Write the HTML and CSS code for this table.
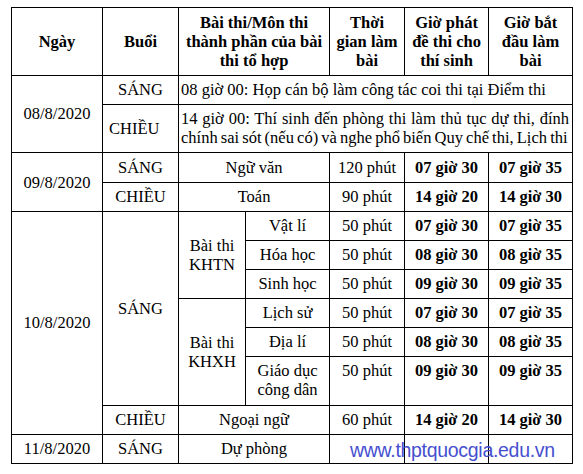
FILE: index.html
```html
<!DOCTYPE html>
<html lang="vi">
<head>
  <meta charset="UTF-8" />
  <meta name="viewport" content="width=device-width, initial-scale=1.0" />
  <title>Lịch thi tốt nghiệp THPT 2020</title>
  <link rel="stylesheet" href="styles.css">
</head>
<body>
  <table class="schedule">
    <colgroup>
      <col class="c-date">
      <col class="c-session">
      <col class="c-group">
      <col class="c-subject">
      <col class="c-time">
      <col class="c-hand">
      <col class="c-start">
    </colgroup>
    <thead>
      <tr>
        <th>Ngày</th>
        <th>Buổi</th>
        <th colspan="2">Bài thi/Môn thi<br>thành phần của bài<br>thi tổ hợp</th>
        <th>Thời<br>gian làm<br>bài</th>
        <th>Giờ phát<br>đề thi cho<br>thí sinh</th>
        <th>Giờ bắt<br>đầu làm<br>bài</th>
      </tr>
    </thead>
    <tbody>
      <tr>
        <td rowspan="2">08/8/2020</td>
        <td>SÁNG</td>
        <td colspan="5" class="note">08 giờ 00: Họp cán bộ làm công tác coi thi tại Điểm thi</td>
      </tr>
      <tr>
        <td class="shift">CHIỀU</td>
        <td colspan="5" class="note"><span class="first-line">14 giờ 00: Thí sinh đến phòng thi làm thủ tục dự thi, đính</span><span class="last-line">chính sai sót (nếu có) và nghe phổ biến Quy chế thi, Lịch thi</span></td>
      </tr>

      <tr class="day-start">
        <td rowspan="2">09/8/2020</td>
        <td>SÁNG</td>
        <td colspan="2">Ngữ văn</td>
        <td>120 phút</td>
        <td class="hour">07 giờ 30</td>
        <td class="hour">07 giờ 35</td>
      </tr>
      <tr>
        <td>CHIỀU</td>
        <td colspan="2">Toán</td>
        <td>90 phút</td>
        <td class="hour">14 giờ 20</td>
        <td class="hour">14 giờ 30</td>
      </tr>

      <tr>
        <td rowspan="7">10/8/2020</td>
        <td rowspan="6">SÁNG</td>
        <td rowspan="3">Bài thi<br>KHTN</td>
        <td>Vật lí</td>
        <td>50 phút</td>
        <td class="hour">07 giờ 30</td>
        <td class="hour">07 giờ 35</td>
      </tr>
      <tr>
        <td>Hóa học</td>
        <td>50 phút</td>
        <td class="hour">08 giờ 30</td>
        <td class="hour">08 giờ 35</td>
      </tr>
      <tr>
        <td>Sinh học</td>
        <td>50 phút</td>
        <td class="hour">09 giờ 30</td>
        <td class="hour">09 giờ 35</td>
      </tr>
      <tr>
        <td rowspan="3">Bài thi<br>KHXH</td>
        <td>Lịch sử</td>
        <td>50 phút</td>
        <td class="hour">07 giờ 30</td>
        <td class="hour">07 giờ 35</td>
      </tr>
      <tr>
        <td>Địa lí</td>
        <td>50 phút</td>
        <td class="hour">08 giờ 30</td>
        <td class="hour">08 giờ 35</td>
      </tr>
      <tr class="tall">
        <td>Giáo dục<br>công dân</td>
        <td>50 phút</td>
        <td class="hour">09 giờ 30</td>
        <td class="hour">09 giờ 35</td>
      </tr>
      <tr>
        <td>CHIỀU</td>
        <td colspan="2">Ngoại ngữ</td>
        <td>60 phút</td>
        <td class="hour">14 giờ 20</td>
        <td class="hour">14 giờ 30</td>
      </tr>

      <tr>
        <td>11/8/2020</td>
        <td>SÁNG</td>
        <td colspan="2">Dự phòng</td>
        <td></td>
        <td></td>
        <td></td>
      </tr>
    </tbody>
  </table>

  <div class="watermark">www.thptquocgia.edu.vn</div>
</body>
</html>
```

FILE: styles.css
```css
body {
  margin: 0;
  background: #fff;
  color: #000;
  font-family: "Liberation Serif", "Times New Roman", serif;
  font-size: 16.5px;
  line-height: 19px;
}
.schedule {
  margin: 7px 0 0 11px;
  width: 562px;
  table-layout: fixed;
  border-collapse: collapse;
  border: 1px solid #000;
}
.c-date { width: 91px; }
.c-session { width: 76px; }
.c-group { width: 67px; }
.c-subject { width: 84px; }
.c-time { width: 75px; }
.c-hand { width: 84px; }
.c-start { width: 84px; }
.schedule th,
.schedule td {
  border: 1px solid #000;
  padding: 4px 2px 5px;
  text-align: center;
  vertical-align: middle;
  white-space: nowrap;
}
.schedule th {
  padding: 5px 2px 5px;
  font-weight: bold;
}
.schedule td.note {
  text-align: left;
  padding-left: 2px;
  padding-right: 3px;
}
.first-line {
  display: block;
  text-align: justify;
  text-align-last: justify;
}
.last-line {
  display: block;
  word-spacing: -1px;
}
.schedule td.shift {
  text-align: left;
  padding-left: 6px;
}
.schedule .day-start td {
  padding-top: 5px;
}
.schedule .tall td {
  vertical-align: top;
  padding-bottom: 6px;
}
.schedule td.hour {
  font-weight: bold;
}
.watermark {
  position: absolute;
  left: 350px;
  top: 440px;
  font-family: "Liberation Sans", Arial, sans-serif;
  font-size: 19.5px;
  line-height: 20px;
  letter-spacing: -0.3px;
  color: #4650cf;
  white-space: nowrap;
}
```
